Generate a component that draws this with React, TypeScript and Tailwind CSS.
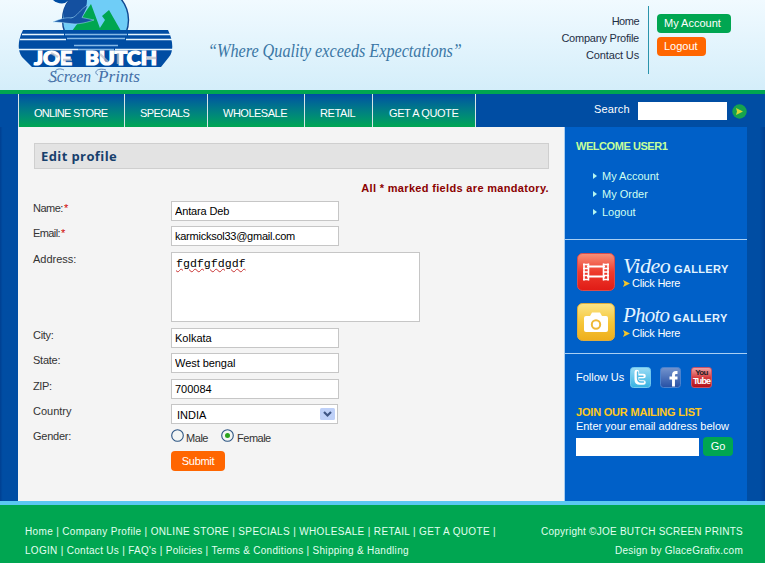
import React from "react";

function Logo() {
  return (
    <svg width="156" height="90" viewBox="18 0 156 90" className="block">
      <defs>
        <clipPath id="disc"><circle cx="95.5" cy="20" r="33" /></clipPath>
      </defs>
      <path d="M53 0 C56 3 61 4 65 3 L69 0 Z" fill="#004da3" />
      <circle cx="95.5" cy="20" r="33" fill="#6fcdf7" stroke="#10478f" strokeWidth="1.4" />
      <g clipPath="url(#disc)">
        <path d="M62 0 H87 C87 6 85 11 80 16 L64 19 Z" fill="#1450a0" />
        <path d="M72 31 L80 20 L91 4 L101 31 Z" fill="#00a651" />
        <path d="M98 31 L105 20 L102 16 L109 10 L121 31 Z" fill="#00a651" />
      </g>
      <path d="M53 22 C60 19 66 17 71 18 C77 17 80 9 88 5 C86 10 84 14 82 17.5 L94 20 C88 22 84 23 80 23.5 C72 25 65 22 53 22 Z" fill="#1553a3" stroke="#a9dcf7" strokeWidth=".5" />
      <path d="M23 30 H168 C173 40 174 51 169 57 L161 67 H32 L22 57 C17 50 18 40 23 30 Z" fill="#004da3" />
      <g stroke="#e6f6fd" strokeWidth="1.3">
        <path d="M22 34.5 H64 M128 34.5 H170 M20 39.5 H66 M126 39.5 H172" />
        <path d="M18 49.5 H78 M115 49.5 H173" />
      </g>
      <g stroke="#86b9e5" strokeWidth="1.3">
        <path d="M65 34.5 H127 M67 38.5 H125 M74 45.5 H118 M78 49.5 H114" />
      </g>
      <text x="34" y="64.5" fontFamily="Lato, sans-serif" fontWeight="900" fontSize="18" textLength="38" lengthAdjust="spacingAndGlyphs" fill="#fff" stroke="#fff" strokeWidth="1.2">JOE</text>
      <text x="85" y="64.5" fontFamily="Lato, sans-serif" fontWeight="900" fontSize="18" textLength="72" lengthAdjust="spacingAndGlyphs" fill="#fff" stroke="#fff" strokeWidth="1.2">BUTCH</text>
      <path d="M51 53 L58 57 M63 60 H72 M100 54 L108 62 M118 53 V64 M146 58 H156" stroke="#b6bcc6" strokeWidth="2.4" opacity=".7" />
      <text x="49" y="81.5" fontFamily="'Liberation Serif', serif" fontStyle="italic" fontSize="16" textLength="42" lengthAdjust="spacingAndGlyphs" fill="#4470a8">Screen</text>
      <text x="98" y="81.5" fontFamily="'Liberation Serif', serif" fontStyle="italic" fontSize="16" textLength="42" lengthAdjust="spacingAndGlyphs" fill="#4470a8">Prints</text>
      <path d="M64 70 C58 67 53 71 56 74 M48 80 C49 83 54 82 57 80 M106 70 C97 67 93 73 98 75" fill="none" stroke="#4470a8" strokeWidth=".8" />
    </svg>
  );
}

function Label({ children, star }: { children: React.ReactNode; star?: boolean }) {
  return (
    <div className="w-[138px] text-[#333] leading-[14px]">
      {children}
      {star && <span className="ml-px text-[#d00000]">*</span>}
    </div>
  );
}

function Field({ value, className = "" }: { value: string; className?: string }) {
  return (
    <input
      readOnly
      value={value}
      className={"block h-5 w-[168px] rounded-none border border-[#c6c6c6] bg-white px-[3px] text-[11px] text-black outline-none " + className}
    />
  );
}

function Radio({ on }: { on?: boolean }) {
  return (
    <svg width="13" height="13" viewBox="0 0 13 13" className="block">
      <circle cx="6.5" cy="6.5" r="5.8" fill="#f4f6f4" stroke="#2c5583" strokeWidth="1.1" />
      {on && <circle cx="6.5" cy="6.5" r="2.5" fill="#2ba31c" />}
    </svg>
  );
}

function Gallery({ name, children, nameClass }: { name: string; children: React.ReactNode; nameClass: string }) {
  return (
    <div className="flex h-[50px]">
      <div className="w-[46px]">{children}</div>
      <div>
        <div className="flex h-6 items-baseline whitespace-nowrap text-[#e3f4ff]">
          <span className={"font-['Liberation_Serif',serif] italic leading-[25px] " + nameClass}>{name}</span>
          <span className="ml-1 text-[11px] font-bold tracking-[0.35px]">GALLERY</span>
        </div>
        <div className="flex h-3 items-center text-white">
          <svg width="7" height="7" viewBox="0 0 7 7" className="mr-0.5"><path d="M0 0 L7 3.5 L0 7 L1.5 3.5 Z" fill="#f5c52a" /></svg>
          <span className="tracking-[-0.25px]">Click Here</span>
        </div>
      </div>
    </div>
  );
}

const nav = [
  { label: "ONLINE STORE", cls: "w-[106px] pl-[15px] tracking-[-0.7px]" },
  { label: "SPECIALS", cls: "w-[83px] pl-[15px] tracking-[-0.55px]" },
  { label: "WHOLESALE", cls: "w-[97px] pl-[15px] tracking-[-0.5px]" },
  { label: "RETAIL", cls: "w-[68px] pl-[15px] tracking-[-0.4px]" },
  { label: "GET A QUOTE", cls: "w-[103px] pl-4 tracking-[-0.4px]" },
];

export default function App() {
  return (
    <div className="flex h-[563px] w-[765px] flex-col overflow-hidden bg-[#004da3] font-['Liberation_Sans',Arial,sans-serif] text-[11px] leading-[14px]">
      <header className="flex h-[90px] shrink-0 bg-linear-to-b from-[#f1faff] to-[#d4eefa]">
        <div className="ml-[18px] w-[156px]"><Logo /></div>
        <div className="ml-[34px] w-[260px] whitespace-nowrap pt-[39px] font-['Liberation_Serif',serif] text-[18px] italic leading-[24px] text-[#3b77a5]">
          <span className="inline-block origin-left scale-x-[0.9] tracking-[-0.02px]">“Where Quality exceeds Expectations”</span>
        </div>
        <div className="flex w-[171px] flex-col items-end pt-[13px] leading-[17px] text-[#1f2f45]">
          <span className="tracking-[-0.5px]">Home</span>
          <span className="tracking-[-0.25px]">Company Profile</span>
          <span className="tracking-[-0.15px]">Contact Us</span>
        </div>
        <div className="ml-[9px] mt-1.5 h-[68px] w-px bg-[#2a94ac]" />
        <div className="ml-2 flex flex-col items-start gap-1 pt-3.5 text-white">
          <span className="flex h-[19px] w-[74px] items-center rounded bg-[#00a651] pb-px pl-[7px]">My Account</span>
          <span className="flex h-[19px] w-[49px] items-center rounded bg-[#ff6600] pb-px pl-[7px]">Logout</span>
        </div>
      </header>
      <div className="h-1 shrink-0 bg-[#00a651]" />
      <nav className="flex h-[33px] shrink-0 pl-[18px] text-white">
        {nav.map((n) => (
          <div key={n.label} className={"flex items-center whitespace-nowrap border-l border-[#d5e5e5] bg-linear-to-b from-[#004da3] to-[#00a651] pt-[5px] " + n.cls}>
            {n.label}
          </div>
        ))}
        <div className="w-px bg-[#d5e5e5]" />
        <div className="ml-[118px] pt-2 tracking-[0.15px]">Search</div>
        <div className="ml-2 mt-2 h-[18px] w-[89px] bg-white" />
        <svg width="15" height="15" viewBox="0 0 15 15" className="ml-[5px] mt-[10px]">
          <circle cx="7.5" cy="7.5" r="7.2" fill="#16a34e" />
          <path d="M4 4 L11 7.5 L4 11 L5 7.5 Z" fill="#d8d634" />
        </svg>
      </nav>
      <main className="flex h-[374px] shrink-0">
        <div className="w-[18px] bg-linear-to-r from-[#003f91] to-[#004da3] to-15%" />
        <section className="w-[546px] bg-[#f4f4f4] pl-[15px] pt-4">
          <div className="ml-px h-[26px] w-[515px] border border-[#cfcfcf] bg-[#e3e3e3] pl-1.5 font-['Open_Sans',sans-serif] text-[13px] font-bold leading-[25px] tracking-[0.4px] text-[#17406d]">Edit profile</div>
          <div className="flex h-8 w-[516px] items-start justify-end whitespace-nowrap pt-3 font-bold tracking-[0.33px] text-[#8b0000]">All * marked fields are mandatory.</div>
          <div className="flex h-[25px]"><Label star><span className="tracking-[-0.5px]">Name:</span></Label><Field value="Antara Deb" className="tracking-[-0.15px]" /></div>
          <div className="flex h-[26px]"><Label star><span className="tracking-[-0.6px]">Email:</span></Label><Field value="karmicksol33@gmail.com" className="tracking-[-0.25px]" /></div>
          <div className="flex h-[76px]">
            <Label>Address:</Label>
            <div className="h-[70px] w-[249px] border border-[#c6c6c6] bg-white pl-1 pt-1 text-black">
              <span className="block w-fit font-['Liberation_Mono',monospace] text-[11.6px] font-normal leading-[14px] underline decoration-[#c83232] decoration-wavy decoration-[0.7px] underline-offset-1">fgdfgfdgdf</span>
            </div>
          </div>
          <div className="flex h-[25px]"><Label><span className="tracking-[-0.3px]">City:</span></Label><Field value="Kolkata" /></div>
          <div className="flex h-[26px]"><Label><span className="tracking-[-0.25px]">State:</span></Label><Field value="West bengal" className="tracking-[-0.05px]" /></div>
          <div className="flex h-[25px]"><Label><span className="tracking-[-0.4px]">ZIP:</span></Label><Field value="700084" /></div>
          <div className="flex h-[25px]">
            <Label>Country</Label>
            <div className="flex h-5 w-[167px] items-center justify-between border border-[#c6c6c6] bg-white pl-[5px] pr-0.5 pt-px text-black">
              INDIA
              <svg width="15" height="12" viewBox="0 0 15 12" className="-mt-0.5"><rect width="15" height="12" rx="1.5" fill="#bed0f8" /><path d="M4 4 L7.5 7.5 L11 4" fill="none" stroke="#3f5684" strokeWidth="2.2" /></svg>
            </div>
          </div>
          <div className="flex h-[22px]">
            <Label><span className="tracking-[-0.25px]">Gender:</span></Label>
            <div className="flex h-[18px] text-[#333]">
              <Radio />
              <span className="ml-0.5 mr-[13px] pt-0.5 tracking-[-0.45px]">Male</span>
              <Radio on />
              <span className="ml-[3px] pt-0.5 tracking-[-0.5px]">Female</span>
            </div>
          </div>
          <div className="ml-[138px] flex h-5 w-[54px] items-center justify-center rounded bg-[#ff6600] tracking-[-0.3px] text-white">Submit</div>
        </section>
        <aside className="flex w-[183px] flex-col border-l border-[#a8cdf0] bg-[#0060c8] text-white">
          <div className="h-[113px] border-b border-[#a9cff3] pl-[11px] pt-3">
            <div className="font-bold tracking-[-0.45px] text-[#c5ff9c]">WELCOME USER1</div>
            <ul className="ml-[17px] mt-[14px] leading-[18px] text-[#cffff0]">
              {["My Account", "My Order", "Logout"].map((t) => (
                <li key={t} className="flex items-center">
                  <svg width="4" height="6" viewBox="0 0 4 6" className="mr-[5px]"><path d="M0 0 L4 3 L0 6 Z" fill="#b5f5f0" /></svg>
                  {t}
                </li>
              ))}
            </ul>
          </div>
          <div className="h-[114px] border-b border-[#a9cff3] pl-3 pt-[13px]">
            <Gallery name="Video" nameClass="w-[47px] text-[22px] tracking-[-0.5px]">
              <svg width="38" height="38" viewBox="0 0 38 38">
                <defs><linearGradient id="rd" x2="0" y2="1"><stop stopColor="#f6927a" /><stop offset=".5" stopColor="#ee3a2c" /><stop offset="1" stopColor="#e01b16" /></linearGradient></defs>
                <rect x=".5" y=".5" width="37" height="37" rx="5" fill="url(#rd)" stroke="#d84c4c" />
                <path d="M10 13.5 H28 M10 23.5 H28" stroke="#fff" strokeWidth="2" />
                <path d="M7 10.5 V27.5 M11.5 10.5 V27.5 M26.5 10.5 V27.5 M31 10.5 V27.5" stroke="#fff" strokeWidth="1.6" />
                <path d="M6 11.5 H12 M6 15.5 H12 M6 19 H12 M6 22.5 H12 M6 26.5 H12 M26 11.5 H32 M26 15.5 H32 M26 19 H32 M26 22.5 H32 M26 26.5 H32" stroke="#fff" strokeWidth="1.4" />
              </svg>
            </Gallery>
            <Gallery name="Photo" nameClass="w-[46px] text-[21px] tracking-[-0.8px]">
              <svg width="38" height="38" viewBox="0 0 38 38">
                <defs><linearGradient id="yl" x2="0" y2="1"><stop stopColor="#fae58a" /><stop offset=".5" stopColor="#f6c73a" /><stop offset="1" stopColor="#eeae1b" /></linearGradient></defs>
                <rect x=".5" y=".5" width="37" height="37" rx="5" fill="url(#yl)" stroke="#e0ad3d" />
                <path d="M9 13 H13 L15 9.5 H23 L25 13 H29 Q31 13 31 15 V27 Q31 29 29 29 H9 Q7 29 7 27 V15 Q7 13 9 13 Z" fill="#fff" />
                <circle cx="19" cy="21.5" r="4.2" fill="#fff" stroke="#efb836" strokeWidth="2" />
              </svg>
            </Gallery>
          </div>
          <div className="pl-[11px] pt-3">
            <div className="flex h-[22px] items-center">
              <span className="w-[54px]">Follow Us</span>
              <svg width="21" height="21" viewBox="0 0 21 21">
                <defs><linearGradient id="tw" x2="0" y2="1"><stop stopColor="#9bdcf5" /><stop offset="1" stopColor="#35b2e2" /></linearGradient></defs>
                <rect x=".5" y=".5" width="20" height="20" rx="3" fill="url(#tw)" stroke="#70c8ef" />
                <path d="M6.8 5 V12.5 Q6.8 15.5 9.8 15.5 H13.5 M7 9 H13.5" fill="none" stroke="#fff" strokeWidth="4.6" strokeLinecap="round" />
                <path d="M7.6 5 V11 Q7.6 15 11 15 H13.5 M7.6 9.2 H13" fill="none" stroke="#55bce6" strokeWidth="1.5" strokeLinecap="round" />
              </svg>
              <svg width="21" height="21" viewBox="0 0 21 21" className="ml-[9px]">
                <defs><linearGradient id="fb" x2="0" y2="1"><stop stopColor="#7494cd" /><stop offset="1" stopColor="#2650a5" /></linearGradient></defs>
                <rect x=".5" y=".5" width="20" height="20" rx="3" fill="url(#fb)" stroke="#4b82ce" />
                <path d="M17.5 5.5 H16 Q13.5 5.5 13.5 8 V19.5 M9.5 11 H17.5" fill="none" stroke="#fff" strokeWidth="2.9" />
              </svg>
              <div className="ml-[10px] flex h-[21px] w-[21px] flex-col items-center rounded-[3px] border border-[#c65167] bg-linear-to-b from-[#eea0a4] via-[#d43b3f] to-[#b40f19] font-bold">
                <span className="text-[8px] leading-[9px] tracking-[-0.6px] text-[#242026]">You</span>
                <span className="text-[9px] leading-[9px] tracking-[-0.9px]">Tube</span>
              </div>
            </div>
            <div className="mt-[17px] font-bold tracking-[-0.2px] text-[#ffc81e]">JOIN OUR MAILING LIST</div>
            <div className="whitespace-nowrap tracking-[-0.04px]">Enter your email address below</div>
            <div className="mt-1 flex items-center">
              <div className="h-[18px] w-[123px] bg-white" />
              <span className="ml-1 flex h-[19px] w-[30px] items-center justify-center rounded bg-[#00a651] pb-px">Go</span>
            </div>
          </div>
        </aside>
        <div className="w-[18px] bg-linear-to-r from-[#004da3] from-70% to-[#003f91]" />
      </main>
      <div className="h-1 shrink-0 bg-[#5ac8f2]" />
      <footer className="flex h-[58px] shrink-0 justify-between bg-[#00a651] pl-[25px] pr-[22px] pt-[17px] text-[10px] leading-[19px] text-[#e2fff0]">
        <div className="whitespace-nowrap">
          <div className="tracking-[0.35px]">Home | Company Profile | ONLINE STORE | SPECIALS | WHOLESALE | RETAIL | GET A QUOTE |</div>
          <div className="tracking-[0.3px]">LOGIN | Contact Us | FAQ's | Policies | Terms &amp; Conditions | Shipping &amp; Handling</div>
        </div>
        <div className="whitespace-nowrap text-right">
          <div className="tracking-[0.25px]">Copyright ©JOE BUTCH SCREEN PRINTS</div>
          <div className="tracking-[0.25px]">Design by GlaceGrafix.com</div>
        </div>
      </footer>
    </div>
  );
}
